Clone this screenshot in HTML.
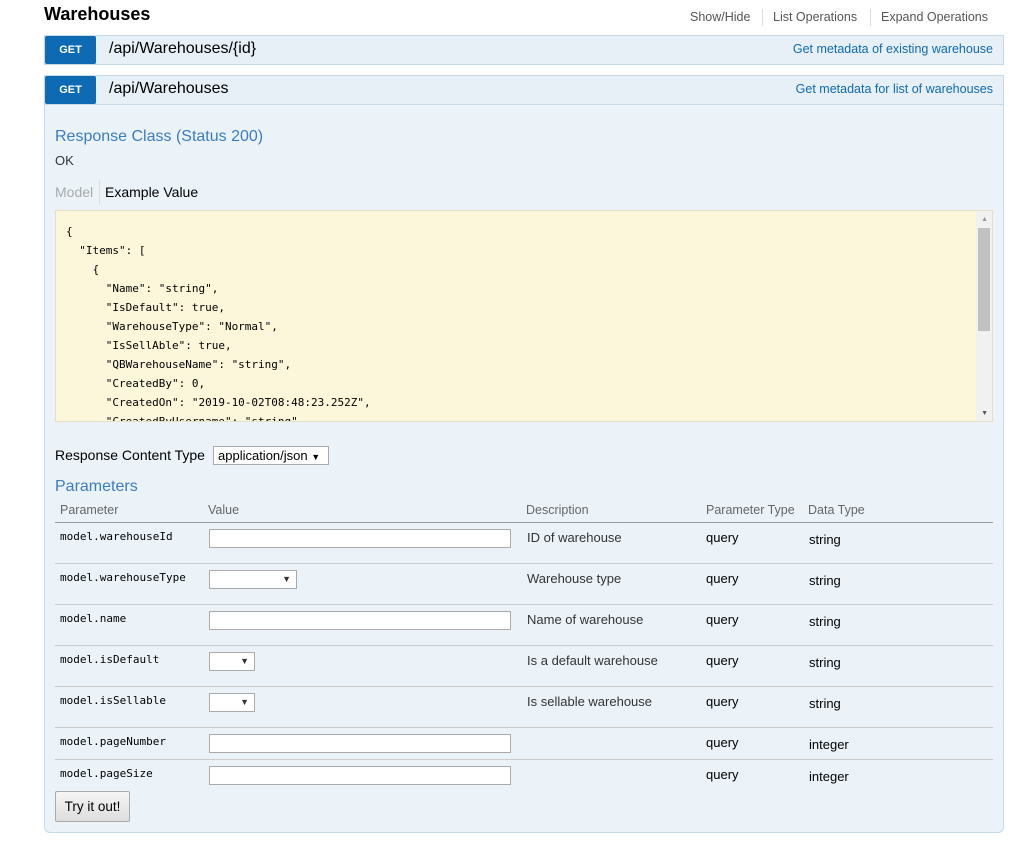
<!DOCTYPE html>
<html><head><meta charset="utf-8"><style>
*{margin:0;padding:0;box-sizing:border-box}
body{width:1031px;height:846px;background:#fff;font-family:"Liberation Sans",Arial,sans-serif;font-size:13px;color:#333;position:relative;overflow:hidden}
.a{position:absolute;white-space:nowrap}
.bar{position:absolute;left:44px;width:960px;height:30px;background:#e7f0f7;border:1px solid #c3d9ec}
.get{position:absolute;left:0;top:0;width:51px;height:28px;background:#0f6ab4;color:#fff;font-size:11px;font-weight:bold;text-align:center;line-height:29px;border-radius:2px}
.path{position:absolute;left:64px;top:4px;font-size:16px;color:#000}
.sum{position:absolute;right:10px;top:6px;font-size:12.5px;color:#0f6ab4}
.mono{font-family:"DejaVu Sans Mono","Liberation Mono",monospace;font-size:11px;color:#000}
.inp{position:absolute;left:209px;width:302px;height:19px;background:#fff;border:1px solid #aaa}
.sel{position:absolute;left:209px;height:19px;background:#fff;border:1px solid #aaa;font-size:9px;text-align:right;padding-right:5px;line-height:17px}
.hr{position:absolute;left:55px;width:938px;height:1px;background:#ccc}
pre{font-family:"DejaVu Sans Mono","Liberation Mono",monospace;font-size:11px;line-height:19px;color:#000}
</style></head><body>
<div class="a" style="left:44px;top:4px;font-size:18px;font-weight:bold;color:#000">Warehouses</div>
<div class="a" style="left:690px;top:10px;font-size:12.5px;color:#555">Show/Hide</div>
<div class="a" style="left:762px;top:9px;width:1px;height:17px;background:#ddd"></div>
<div class="a" style="left:773px;top:10px;font-size:12.5px;color:#555">List Operations</div>
<div class="a" style="left:870px;top:9px;width:1px;height:17px;background:#ddd"></div>
<div class="a" style="left:881px;top:10px;font-size:12.5px;color:#555">Expand Operations</div>

<div class="bar" style="top:35px"><div class="get">GET</div><div class="path">/api/Warehouses/{id}</div><div class="sum">Get metadata of existing warehouse</div></div>

<div class="a" style="left:44px;top:75px;width:960px;height:758px;background:#ebf3f9;border:1px solid #c3d9ec;border-radius:0 0 6px 6px"></div>
<div class="bar" style="top:75px;height:30px"><div class="get">GET</div><div class="path">/api/Warehouses</div><div class="sum">Get metadata for list of warehouses</div></div>

<div class="a" style="left:55px;top:128px;font-size:16px;color:#3b7dc0">Response Class (Status 200)</div>
<div class="a" style="left:55px;top:153px;font-size:13px;color:#333">OK</div>
<div class="a" style="left:55px;top:184px;font-size:14px;color:#aaa">Model</div>
<div class="a" style="left:99px;top:180px;width:1px;height:25px;background:#ddd"></div>
<div class="a" style="left:105px;top:184px;font-size:14px;color:#000">Example Value</div>

<div class="a" style="left:55px;top:210px;width:938px;height:212px;background:#fcf6db;border:1px solid #e5e0c6;overflow:hidden">
<pre style="position:absolute;left:10px;top:11px">{
  "Items": [
    {
      "Name": "string",
      "IsDefault": true,
      "WarehouseType": "Normal",
      "IsSellAble": true,
      "QBWarehouseName": "string",
      "CreatedBy": 0,
      "CreatedOn": "2019-10-02T08:48:23.252Z",
      "CreatedByUsername": "string",</pre>
<div style="position:absolute;right:0;top:0;width:16px;height:210px;background:#f1f1f1"></div>
<div style="position:absolute;right:2px;top:17px;width:12px;height:103px;background:#c1c1c1"></div>
<div style="position:absolute;right:4px;top:5px;font-size:7px;color:#999">▲</div>
<div style="position:absolute;right:4px;bottom:4px;font-size:7px;color:#555">▼</div>
</div>

<div class="a" style="left:55px;top:447px;font-size:14px;color:#000">Response Content Type</div>
<div class="a" style="left:213px;top:446px;width:116px;height:19px;background:#fff;border:1px solid #aaa;font-size:13px;color:#000;padding-left:4px;line-height:17px">application/json <span style="font-size:9px">▼</span></div>

<div class="a" style="left:55px;top:478px;font-size:16px;color:#3b7dc0">Parameters</div>
<div class="a" style="left:60px;top:503px;font-size:12.5px;color:#666">Parameter</div>
<div class="a" style="left:208px;top:503px;font-size:12.5px;color:#666">Value</div>
<div class="a" style="left:526px;top:503px;font-size:12.5px;color:#666">Description</div>
<div class="a" style="left:706px;top:503px;font-size:12.5px;color:#666">Parameter Type</div>
<div class="a" style="left:808px;top:503px;font-size:12.5px;color:#666">Data Type</div>
<div class="hr" style="top:522px;background:#999"></div>

<div class="a mono" style="left:60px;top:530px">model.warehouseId</div>
<div class="inp" style="top:529px"></div>
<div class="a" style="left:527px;top:530px;color:#333">ID of warehouse</div>
<div class="a" style="left:706px;top:530px;color:#000">query</div>
<div class="a" style="left:809px;top:532px;color:#000">string</div>
<div class="hr" style="top:563px"></div>

<div class="a mono" style="left:60px;top:571px">model.warehouseType</div>
<div class="sel" style="top:570px;width:88px">▼</div>
<div class="a" style="left:527px;top:571px;color:#333">Warehouse type</div>
<div class="a" style="left:706px;top:571px;color:#000">query</div>
<div class="a" style="left:809px;top:573px;color:#000">string</div>
<div class="hr" style="top:604px"></div>

<div class="a mono" style="left:60px;top:612px">model.name</div>
<div class="inp" style="top:611px"></div>
<div class="a" style="left:527px;top:612px;color:#333">Name of warehouse</div>
<div class="a" style="left:706px;top:612px;color:#000">query</div>
<div class="a" style="left:809px;top:614px;color:#000">string</div>
<div class="hr" style="top:645px"></div>

<div class="a mono" style="left:60px;top:653px">model.isDefault</div>
<div class="sel" style="top:652px;width:46px">▼</div>
<div class="a" style="left:527px;top:653px;color:#333">Is a default warehouse</div>
<div class="a" style="left:706px;top:653px;color:#000">query</div>
<div class="a" style="left:809px;top:655px;color:#000">string</div>
<div class="hr" style="top:686px"></div>

<div class="a mono" style="left:60px;top:694px">model.isSellable</div>
<div class="sel" style="top:693px;width:46px">▼</div>
<div class="a" style="left:527px;top:694px;color:#333">Is sellable warehouse</div>
<div class="a" style="left:706px;top:694px;color:#000">query</div>
<div class="a" style="left:809px;top:696px;color:#000">string</div>
<div class="hr" style="top:727px"></div>

<div class="a mono" style="left:60px;top:735px">model.pageNumber</div>
<div class="inp" style="top:734px"></div>
<div class="a" style="left:706px;top:735px;color:#000">query</div>
<div class="a" style="left:809px;top:737px;color:#000">integer</div>
<div class="hr" style="top:759px"></div>

<div class="a mono" style="left:60px;top:767px">model.pageSize</div>
<div class="inp" style="top:766px"></div>
<div class="a" style="left:706px;top:767px;color:#000">query</div>
<div class="a" style="left:809px;top:769px;color:#000">integer</div>

<div class="a" style="left:55px;top:791px;width:75px;height:31px;background:linear-gradient(#f6f6f6,#ddd);border:1px solid #aaa;border-radius:2px;font-size:13.5px;color:#000;text-align:center;line-height:29px">Try it out!</div>
</body></html>
